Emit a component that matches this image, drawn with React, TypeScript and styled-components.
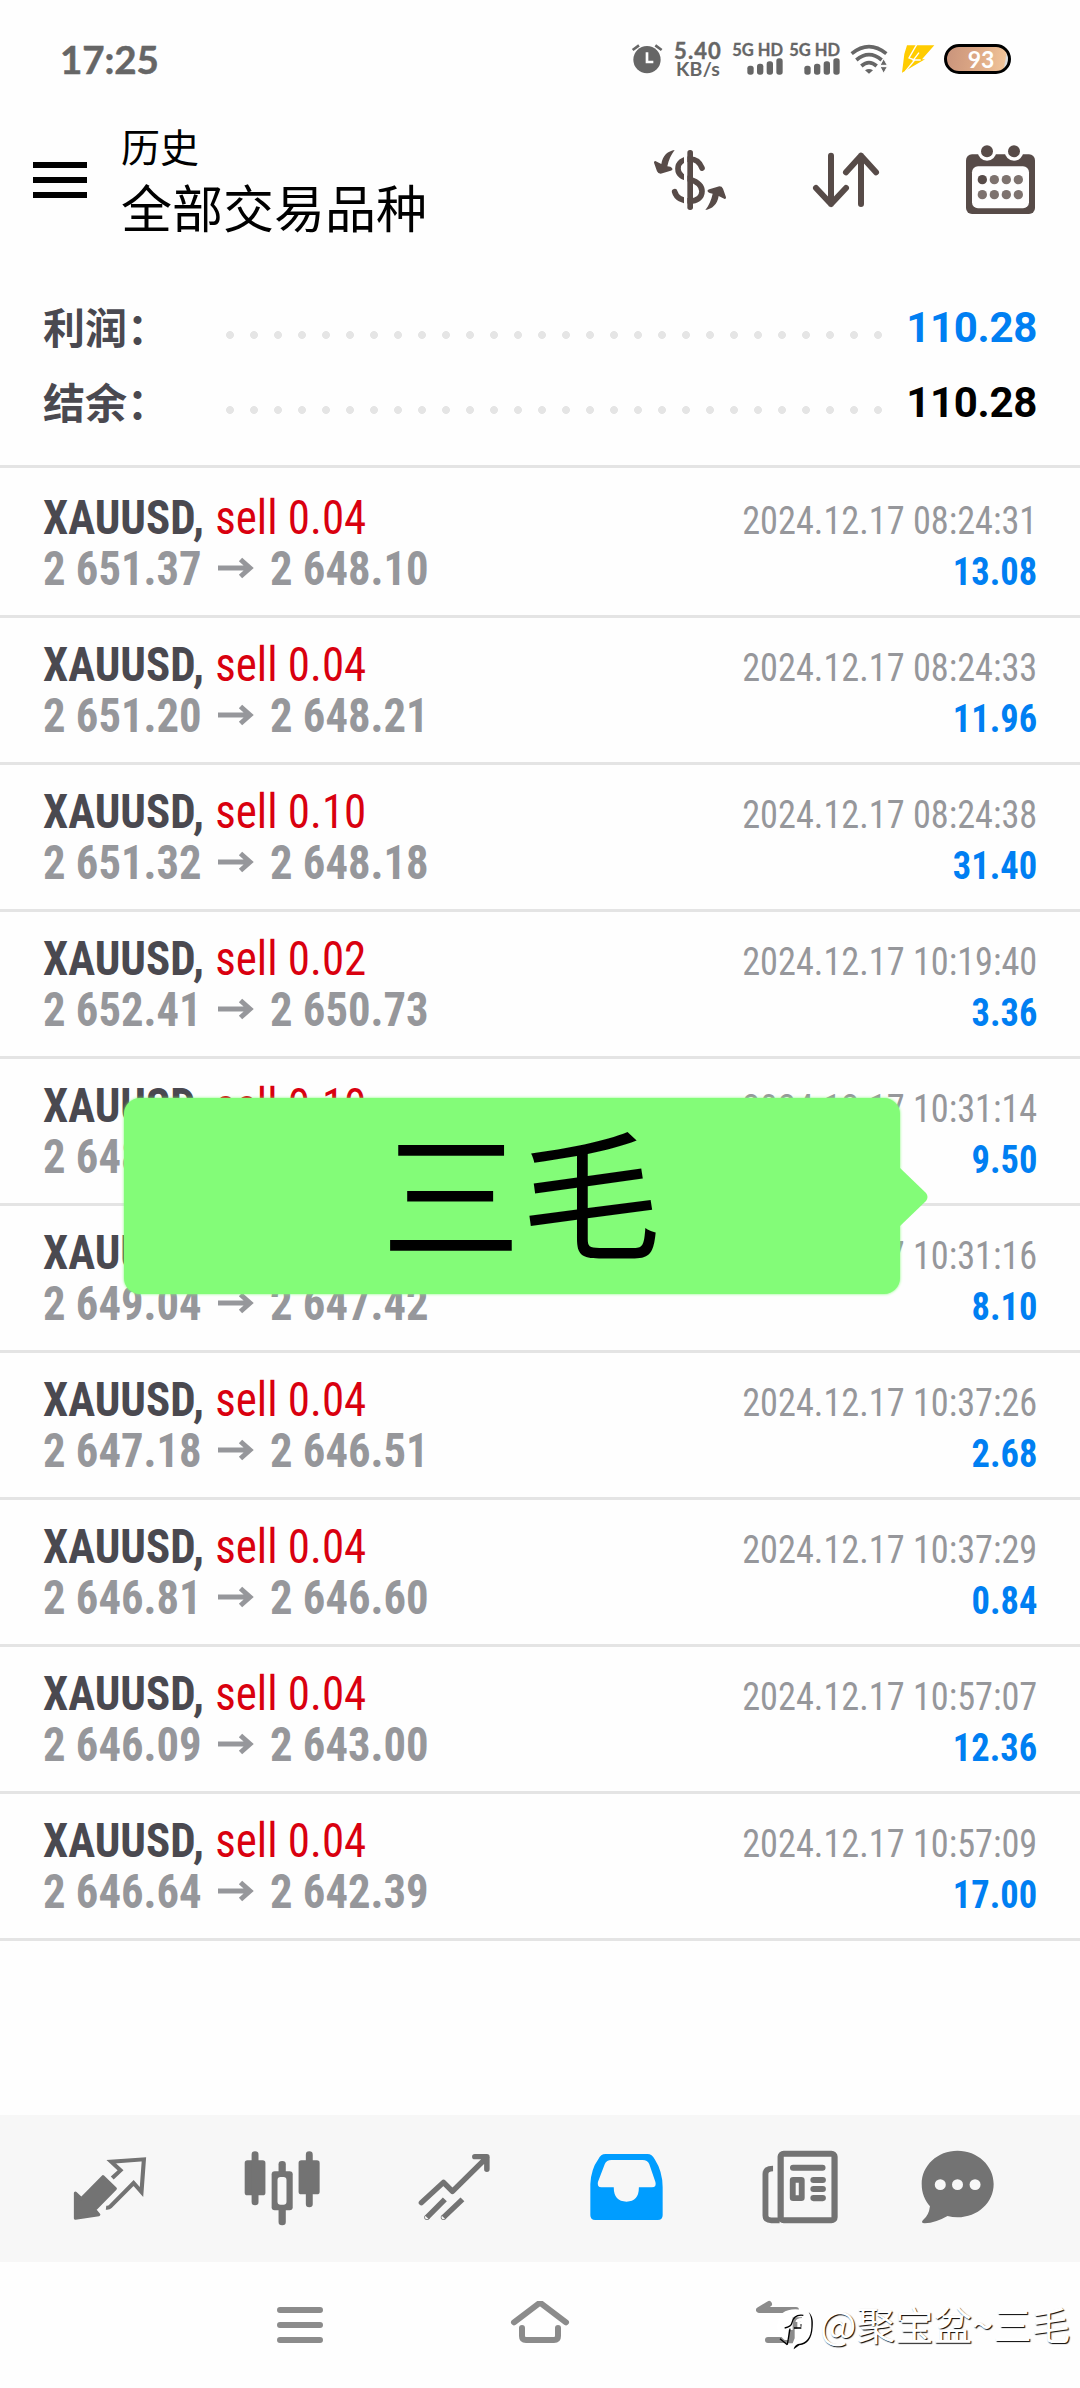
import React from "react";
import styled, { createGlobalStyle } from "styled-components";

const GlobalStyle = createGlobalStyle`
  * { box-sizing: border-box; }
  body { margin: 0; background: #fefefe; }
`;

const cjk = `"Noto Sans CJK SC", sans-serif`;
const condensed = `"Roboto Condensed", Roboto, sans-serif`;

const Screen = styled.main`
  position: relative;
  display: flex;
  flex-direction: column;
  width: 1080px;
  height: 2388px;
  overflow: hidden;
  background: #fefefe;
  font-family: Roboto, ${cjk};
`;

/* ---------- status bar ---------- */

const StatusBar = styled.header`
  display: flex;
  align-items: center;
  height: 117px;
  padding: 0 69px 0 60px;
  color: #666;
  font-family: Lato, "Noto Sans", sans-serif;
  font-weight: 700;
  white-space: nowrap;
`;

const Clock = styled.div`
  flex: 1;
  font-size: 38.5px;
  line-height: 48px;
  letter-spacing: -0.1px;
  -webkit-text-stroke: 0.5px currentColor;
`;

const NetSpeed = styled.div`
  display: flex;
  flex-direction: column;
  align-items: center;
  width: 52px;
  margin: 1px 11px 0 9px;
`;

const SpeedValue = styled.span`
  font-size: 22px;
  line-height: 19px;
  letter-spacing: 1.1px;
  -webkit-text-stroke: 0.4px currentColor;
`;

const SpeedUnit = styled.span`
  font-size: 19.5px;
  line-height: 18px;
  letter-spacing: 0.2px;
`;

const Sim = styled.div`
  display: flex;
  flex-direction: column;
  align-items: flex-end;
  width: 48px;
  margin-right: 9px;
`;

const SimLabel = styled.span`
  font-size: 16.5px;
  line-height: 16px;
  -webkit-text-stroke: 0.3px currentColor;
`;

const Battery = styled.div`
  display: flex;
  align-items: center;
  justify-content: center;
  width: 67px;
  height: 30px;
  margin-left: 9px;
  padding-left: 7px;
  border: 3px solid #000;
  border-radius: 15px;
  background: linear-gradient(100deg, #c9947c, #dba684 45%, #f0c398 92%, #ddd 94%);
  color: #fff;
  font-size: 23px;
  line-height: 24px;
`;

/* ---------- toolbar ---------- */

const Toolbar = styled.div`
  display: flex;
  align-items: center;
  height: 126px;
  padding: 0 45px 0 33px;
`;

const Burger = styled.button`
  display: flex;
  flex-direction: column;
  gap: 9px;
  width: 54px;
  padding: 0;
  border: 0;
  background: none;
`;

const BurgerBar = styled.span`
  height: 6px;
  background: #000;
`;

const Titles = styled.div`
  flex: 1;
  margin-left: 34px;
  padding-bottom: 8px;
  color: #000;
  font-family: ${cjk};
`;

const Caption = styled.div`
  font-size: 39px;
  line-height: 60px;
`;

const Title = styled.h1`
  margin: 0;
  font-size: 51px;
  font-weight: 400;
  line-height: 62px;
`;

const Actions = styled.div`
  display: flex;
  align-items: center;
`;

const Glyph = styled.svg<{ $gap?: number }>`
  display: block;
  flex: none;
  margin-left: ${(p) => p.$gap ?? 0}px;
`;

/* ---------- totals ---------- */

const Totals = styled.section`
  display: flex;
  flex-direction: column;
  padding: 47px 43px 25px;
  border-bottom: 3px solid #e4e4e4;
`;

const TotalRow = styled.div`
  display: flex;
  align-items: center;
  height: 75px;
  line-height: 75px;
`;

const TotalLabel = styled.span`
  width: 175px;
  padding-bottom: 5px;
  color: #4a4950;
  font-family: ${cjk};
  font-size: 42px;
  font-weight: 700;
`;

const Leader = styled.span`
  width: 672px;
  height: 8px;
  margin-top: 15px;
  background: radial-gradient(circle at 12px 4px, #e5e5e5 3.6px, transparent 4.3px) 0 0 / 24px 8px repeat-x;
`;

const TotalValue = styled.span<{ $accent?: boolean }>`
  flex: 1;
  color: ${(p) => (p.$accent ? "#007ff2" : "#000")};
  font-size: 42px;
  font-weight: 700;
  letter-spacing: -0.3px;
  text-align: right;
`;

/* ---------- deals ---------- */

const Deals = styled.ul`
  position: relative;
  flex: 1;
  margin: 0;
  padding: 3px 0 0;
  list-style: none;
  font-family: ${condensed};
`;

const Deal = styled.li`
  height: 147px;
  padding: 21px 43px 0;
  border-bottom: 3px solid #e4e4e4;
`;

const DealLine = styled.div`
  display: flex;
  align-items: baseline;
  justify-content: space-between;
  height: 51px;
  line-height: 51px;
  white-space: nowrap;
`;

const Instrument = styled.span`
  display: inline-block;
  font-size: 48px;
  transform: scaleX(0.937);
  transform-origin: left;
`;

const Symbol = styled.span`
  color: #4a4950;
  font-weight: 700;
`;

const Volume = styled.span`
  margin-left: 12px;
  color: #d9000f;
`;

const Prices = styled.span`
  display: flex;
  align-items: baseline;
  color: #96979b;
  font-size: 48px;
  font-weight: 700;
`;

const Price = styled.span`
  width: 175px;
  transform: scaleX(0.93);
  transform-origin: left;
`;

const Arrow = styled.svg`
  width: 36px;
  height: 22px;
  margin-right: 16px;
  transform: translateY(-6px);
`;

const Stamp = styled.time`
  color: #96979b;
  font-size: 39px;
  transform: scaleX(0.93);
  transform-origin: right;
`;

const Profit = styled.span`
  color: #007ff2;
  font-size: 39px;
  font-weight: 700;
  transform: scaleX(0.935);
  transform-origin: right;
`;

const Bubble = styled.div`
  position: absolute;
  top: 1098px;
  left: 124px;
  display: flex;
  align-items: center;
  justify-content: center;
  width: 776px;
  height: 196px;
  padding: 0 0 16px 18px;
  border-radius: 16px;
  background: #83fc78;
  box-shadow: 0 0 3px #83fc78;
  color: #000;
  font-family: ${cjk};
  font-size: 140px;
  line-height: 180px;
`;

const BubbleTail = styled.svg`
  position: absolute;
  top: 69px;
  left: 775px;
  width: 30px;
  height: 60px;
`;

/* ---------- bottom bars ---------- */

const TabBar = styled.nav`
  display: grid;
  grid-template-columns: repeat(6, 172px);
  justify-content: center;
  height: 147px;
  background: #f7f7f7;
`;

const Tab = styled.button<{ $active?: boolean; $top: number; $shift?: number }>`
  display: flex;
  justify-content: center;
  padding: ${(p) => p.$top}px ${(p) => p.$shift ?? 0}px 0 0;
  border: 0;
  background: none;
  color: ${(p) => (p.$active ? "#009dff" : "#737373")};
`;

const SystemBar = styled.footer`
  position: relative;
  display: grid;
  grid-template-columns: repeat(3, 240px);
  justify-content: center;
  align-items: center;
  justify-items: center;
  height: 126px;
  background: #fefefe;
  color: #8b8b8b;
`;

const Watermark = styled.div`
  position: absolute;
  top: 38px;
  left: 776px;
  display: flex;
  align-items: center;
  height: 50px;
  color: #fff;
  font-family: ${cjk};
  font-size: 38.5px;
  line-height: 50px;
  text-shadow: 1px 1px 1px #000;
  white-space: nowrap;
`;

const WatermarkText = styled.span`
  padding-bottom: 5px;
`;

const deals = [
  ["0.04", "2 651.37", "2 648.10", "2024.12.17 08:24:31", "13.08"],
  ["0.04", "2 651.20", "2 648.21", "2024.12.17 08:24:33", "11.96"],
  ["0.10", "2 651.32", "2 648.18", "2024.12.17 08:24:38", "31.40"],
  ["0.02", "2 652.41", "2 650.73", "2024.12.17 10:19:40", "3.36"],
  ["0.10", "2 648.32", "2 647.37", "2024.12.17 10:31:14", "9.50"],
  ["0.05", "2 649.04", "2 647.42", "2024.12.17 10:31:16", "8.10"],
  ["0.04", "2 647.18", "2 646.51", "2024.12.17 10:37:26", "2.68"],
  ["0.04", "2 646.81", "2 646.60", "2024.12.17 10:37:29", "0.84"],
  ["0.04", "2 646.09", "2 643.00", "2024.12.17 10:57:07", "12.36"],
  ["0.04", "2 646.64", "2 642.39", "2024.12.17 10:57:09", "17.00"],
];

const SignalBars = () => (
  <Glyph width="36" height="17" viewBox="0 0 108 51" fill="currentColor">
    <rect x="1" y="23" width="19" height="27" rx="8" />
    <rect x="30" y="17" width="19" height="33" rx="8" />
    <rect x="59" y="10" width="19" height="40" rx="8" />
    <rect x="88" y="1" width="19" height="49" rx="8" />
  </Glyph>
);

export default function App() {
  return (
    <Screen>
      <GlobalStyle />
      <StatusBar>
        <Clock>17:25</Clock>
        <Glyph width="32" height="30" viewBox="94 74 94 90">
          <circle cx="141" cy="121" r="41" fill="#666" />
          <path d="M141 99V128H160" fill="none" stroke="#fff" strokeWidth="8" />
          <path d="M98 92L117 78M166 78L185 92" stroke="#666" strokeWidth="8" />
        </Glyph>
        <NetSpeed>
          <SpeedValue>5.40</SpeedValue>
          <SpeedUnit>KB/s</SpeedUnit>
        </NetSpeed>
        <Sim>
          <SimLabel>5G HD</SimLabel>
          <SignalBars />
        </Sim>
        <Sim>
          <SimLabel>5G HD</SimLabel>
          <SignalBars />
        </Sim>
        <Glyph width="38" height="30" viewBox="751 74 114 90" $gap={1}>
          <g fill="none" stroke="#666" strokeWidth="11">
            <path d="M756 103Q808 61 860 103" />
            <path d="M770 122Q808 90 846 122" />
            <path d="M785 140Q808 120 831 140" />
          </g>
          <path d="M796 153Q808 145 820 153L808 163Z" fill="#666" />
          <path d="M852 118L863 138H841ZM852 162L863 142H841Z" fill="#666" stroke="#fefefe" strokeWidth="3" />
        </Glyph>
        <Glyph width="34" height="30" viewBox="903 74 102 90" $gap={13}>
          <path d="M921 78H1003L966 120H975L906 160L913 104Z" fill="#fc0" />
          <path d="M950 76L927 116L944 122L916 156M957 100L940 122H962" fill="none" stroke="#fefefe" strokeWidth="4" />
        </Glyph>
        <Battery>93</Battery>
      </StatusBar>

      <Toolbar>
        <Burger aria-label="menu">
          <BurgerBar />
          <BurgerBar />
          <BurgerBar />
        </Burger>
        <Titles>
          <Caption>历史</Caption>
          <Title>全部交易品种</Title>
        </Titles>
        <Actions>
          <Glyph width="74" height="62" viewBox="39 27 222 186">
            <path
              d="M186 84C179 66 168 57 150 57C128 57 114 69 114 86C114 107 132 112 150 118C172 125 186 135 186 154C186 174 169 183 150 183C128 183 109 174 104 155"
              fill="none"
              stroke="#574b48"
              strokeWidth="17"
              strokeLinecap="round"
            />
            <rect x="132" y="40" width="10" height="160" fill="#fefefe" />
            <rect x="142" y="30" width="17" height="180" rx="8" fill="#574b48" />
            <path
              d="M104 30C84 33 68 46 64 72L46 63Q41 63 42 68L51 94Q54 101 62 101L92 92Q100 90 96 84Q93 80 82 79C86 60 93 44 104 30Z"
              fill="#574b48"
            />
            <path
              d="M104 30C84 33 68 46 64 72L46 63Q41 63 42 68L51 94Q54 101 62 101L92 92Q100 90 96 84Q93 80 82 79C86 60 93 44 104 30Z"
              fill="#574b48"
              transform="rotate(180 150 120)"
            />
          </Glyph>
          <Glyph
            width="68"
            height="56"
            viewBox="636 396 204 168"
            $gap={85}
            fill="none"
            stroke="#574b48"
            strokeWidth="18"
            strokeLinecap="round"
            strokeLinejoin="round"
          >
            <path d="M693 407V552M648 504L693 552L738 504M783 552V407M738 457L783 407L828 457" />
          </Glyph>
          <Glyph width="69" height="70" viewBox="1098 371 207 210" $gap={86}>
            <rect x="1098" y="399" width="207" height="179" rx="18" fill="#574b48" />
            <circle cx="1161" cy="390" r="28" fill="#fefefe" />
            <circle cx="1242" cy="390" r="28" fill="#fefefe" />
            <circle cx="1161" cy="390" r="18" fill="#574b48" />
            <circle cx="1242" cy="390" r="18" fill="#574b48" />
            <rect x="1116" y="435" width="171" height="126" rx="18" fill="#fefefe" />
            {[475, 520].map((y) =>
              [1147, 1183, 1219, 1255].map((x) => (
                <circle key={`${x}-${y}`} cx={x} cy={y} r="14" fill={x + y === 1622 ? "#574b48" : "#7d726e"} />
              ))
            )}
          </Glyph>
        </Actions>
      </Toolbar>

      <Totals>
        <TotalRow>
          <TotalLabel>利润：</TotalLabel>
          <Leader />
          <TotalValue $accent>110.28</TotalValue>
        </TotalRow>
        <TotalRow>
          <TotalLabel>结余：</TotalLabel>
          <Leader />
          <TotalValue>110.28</TotalValue>
        </TotalRow>
      </Totals>

      <Deals>
        {deals.map(([volume, open, close, time, profit]) => (
          <Deal key={time}>
            <DealLine>
              <Instrument>
                <Symbol>XAUUSD,</Symbol>
                <Volume>sell {volume}</Volume>
              </Instrument>
              <Stamp>{time}</Stamp>
            </DealLine>
            <DealLine>
              <Prices>
                <Price>{open}</Price>
                <Arrow viewBox="0 0 36 22" fill="none" stroke="currentColor" strokeWidth="5">
                  <path d="M0 11H33M22.5 2.5L32 11L22.5 19.5" />
                </Arrow>
                <Price>{close}</Price>
              </Prices>
              <Profit>{profit}</Profit>
            </DealLine>
          </Deal>
        ))}
      </Deals>

      <TabBar>
        <Tab $top={41}>
          <Glyph width="74" height="66" viewBox="212 168 215 198" preserveAspectRatio="none">
            <path
              d="M219 279L236 296L299 230L335 266L275 329L287 344L219 355Z"
              fill="currentColor"
              stroke="currentColor"
              strokeWidth="9"
              strokeLinejoin="round"
            />
            <path
              d="M326 234L350 211L323 185L418 178L411 276L388 249L320 320Q316 324 308 323"
              fill="none"
              stroke="currentColor"
              strokeWidth="12"
            />
          </Glyph>
        </Tab>
        <Tab $top={36}>
          <Glyph width="76" height="75" viewBox="707 152 220 225" preserveAspectRatio="none" fill="currentColor">
            <rect x="709" y="180" width="60" height="105" rx="8" />
            <rect x="729" y="153" width="20" height="162" rx="10" />
            <rect x="865" y="180" width="61" height="102" rx="8" />
            <rect x="886" y="153" width="20" height="168" rx="10" />
            <rect x="807" y="182" width="21" height="60" rx="10" />
            <rect x="807" y="300" width="21" height="75" rx="10" />
            <rect x="787" y="213" width="61" height="117" rx="9" />
            <rect x="804" y="230" width="26" height="83" rx="9" fill="#f7f7f7" />
          </Glyph>
        </Tab>
        <Tab $top={38}>
          <Glyph
            width="73"
            height="68"
            viewBox="1211 159 212 204"
            preserveAspectRatio="none"
            fill="none"
            stroke="currentColor"
            strokeWidth="16"
            strokeLinejoin="round"
          >
            <path d="M1221 308L1285 247L1311 274L1411 172M1376 170H1411V208" strokeLinecap="round" />
            <path d="M1289 298L1237 352M1340 298L1285 352" />
            <circle cx="1237" cy="352" r="1" strokeWidth="14" />
            <circle cx="1285" cy="352" r="1" strokeWidth="14" />
          </Glyph>
        </Tab>
        <Tab $top={39} $active>
          <Glyph width="73" height="66" viewBox="145 162 212 198" preserveAspectRatio="none">
            <path
              fillRule="evenodd"
              fill="currentColor"
              d="M190 162H312Q325 162 333 178Q356 215 356 262V346Q356 360 342 360H160Q146 360 146 346V252Q148 208 169 178Q176 162 190 162ZM207 180Q193 180 188 192L168 246Q165 262 178 262H214Q214 305 251 305Q287 305 287 262H325Q339 262 335 246L317 192Q312 180 298 180Z"
            />
          </Glyph>
        </Tab>
        <Tab $top={35}>
          <Glyph width="76" height="74" viewBox="645 151 220 220" preserveAspectRatio="none" fill="none" stroke="currentColor" $gap={4}>
            <rect x="699" y="162" width="156" height="198" rx="9" strokeWidth="18" />
            <path d="M677 206Q655 206 655 222V346Q655 360 672 360H696" strokeWidth="17" />
            <path d="M735 204H820M794 240H821M794 267H821M794 294H821" strokeWidth="18" strokeLinecap="round" />
            <rect x="734" y="240" width="26" height="54" rx="1" strokeWidth="17" strokeLinejoin="round" />
          </Glyph>
        </Tab>
        <Tab $top={35} $shift={25}>
          <Glyph width="73" height="74" viewBox="1107 151 212 220" preserveAspectRatio="none">
            <path
              fill="currentColor"
              d="M1133 318C1118 300 1109 280 1109 252C1109 197 1155 153 1213 153S1318 197 1318 252S1272 351 1213 351Q1198 351 1184 347Q1150 367 1118 369Q1105 368 1113 359Q1130 345 1133 318Z"
            />
            <g fill="#f7f7f7">
              <circle cx="1163" cy="254" r="16" />
              <circle cx="1213" cy="254" r="16" />
              <circle cx="1264" cy="254" r="16" />
            </g>
          </Glyph>
        </Tab>
      </TabBar>

      <SystemBar>
        <Glyph width="46" height="38" viewBox="0 0 46 38" stroke="currentColor" strokeWidth="6" strokeLinecap="round">
          <path d="M3 4H43M3 19H43M3 34H43" />
        </Glyph>
        <Glyph
          width="60"
          height="48"
          viewBox="510 2301 60 48"
          fill="none"
          stroke="currentColor"
          strokeWidth="6"
          strokeLinecap="round"
          strokeLinejoin="round"
        >
          <path d="M514 2322.3L540 2302.7L566 2322.3M522 2328V2336Q522 2340 526 2340H554Q558 2340 558 2336V2328" overflow="visible" />
        </Glyph>
        <Glyph
          width="48"
          height="50"
          viewBox="756 2300 48 50"
          fill="none"
          stroke="currentColor"
          strokeWidth="6"
          strokeLinecap="round"
          strokeLinejoin="round"
        >
          <path d="M769 2304L759 2310H796M768 2340H792" />
        </Glyph>
        <Watermark>
          <Glyph width="44" height="50" viewBox="114 30 132 150" aria-hidden="true">
            <path d="M118 108C118 72 142 58 172 58S222 76 222 108S204 150 168 176L160 150H140C128 140 118 128 118 108Z" fill="#fff" />
            <path d="M164 82H192V116H170V145L164 160H152V120H164Z" fill="#8b8b8b" />
            <path d="M176 96Q178 88 192 88V98H182V114H192" fill="none" stroke="#fff" strokeWidth="8" />
            <path
              d="M212 66C224 78 226 92 224 112C222 146 208 164 184 166Q176 172 167 178Q168 168 180 162C206 160 219 142 220 112C221 92 220 80 212 66Z"
              fill="#000"
            />
            <path
              d="M196 76Q168 72 162 98Q160 110 140 114M168 114H190M156 116L148 164M126 146L148 164"
              fill="none"
              stroke="#000"
              strokeWidth="4"
            />
          </Glyph>
          <WatermarkText>@聚宝盆~三毛</WatermarkText>
        </Watermark>
      </SystemBar>

      <Bubble>
        三毛
        <BubbleTail viewBox="0 0 30 60">
          <path d="M0 0L27 26Q30 30 27 34L0 60Z" fill="#83fc78" />
        </BubbleTail>
      </Bubble>
    </Screen>
  );
}
